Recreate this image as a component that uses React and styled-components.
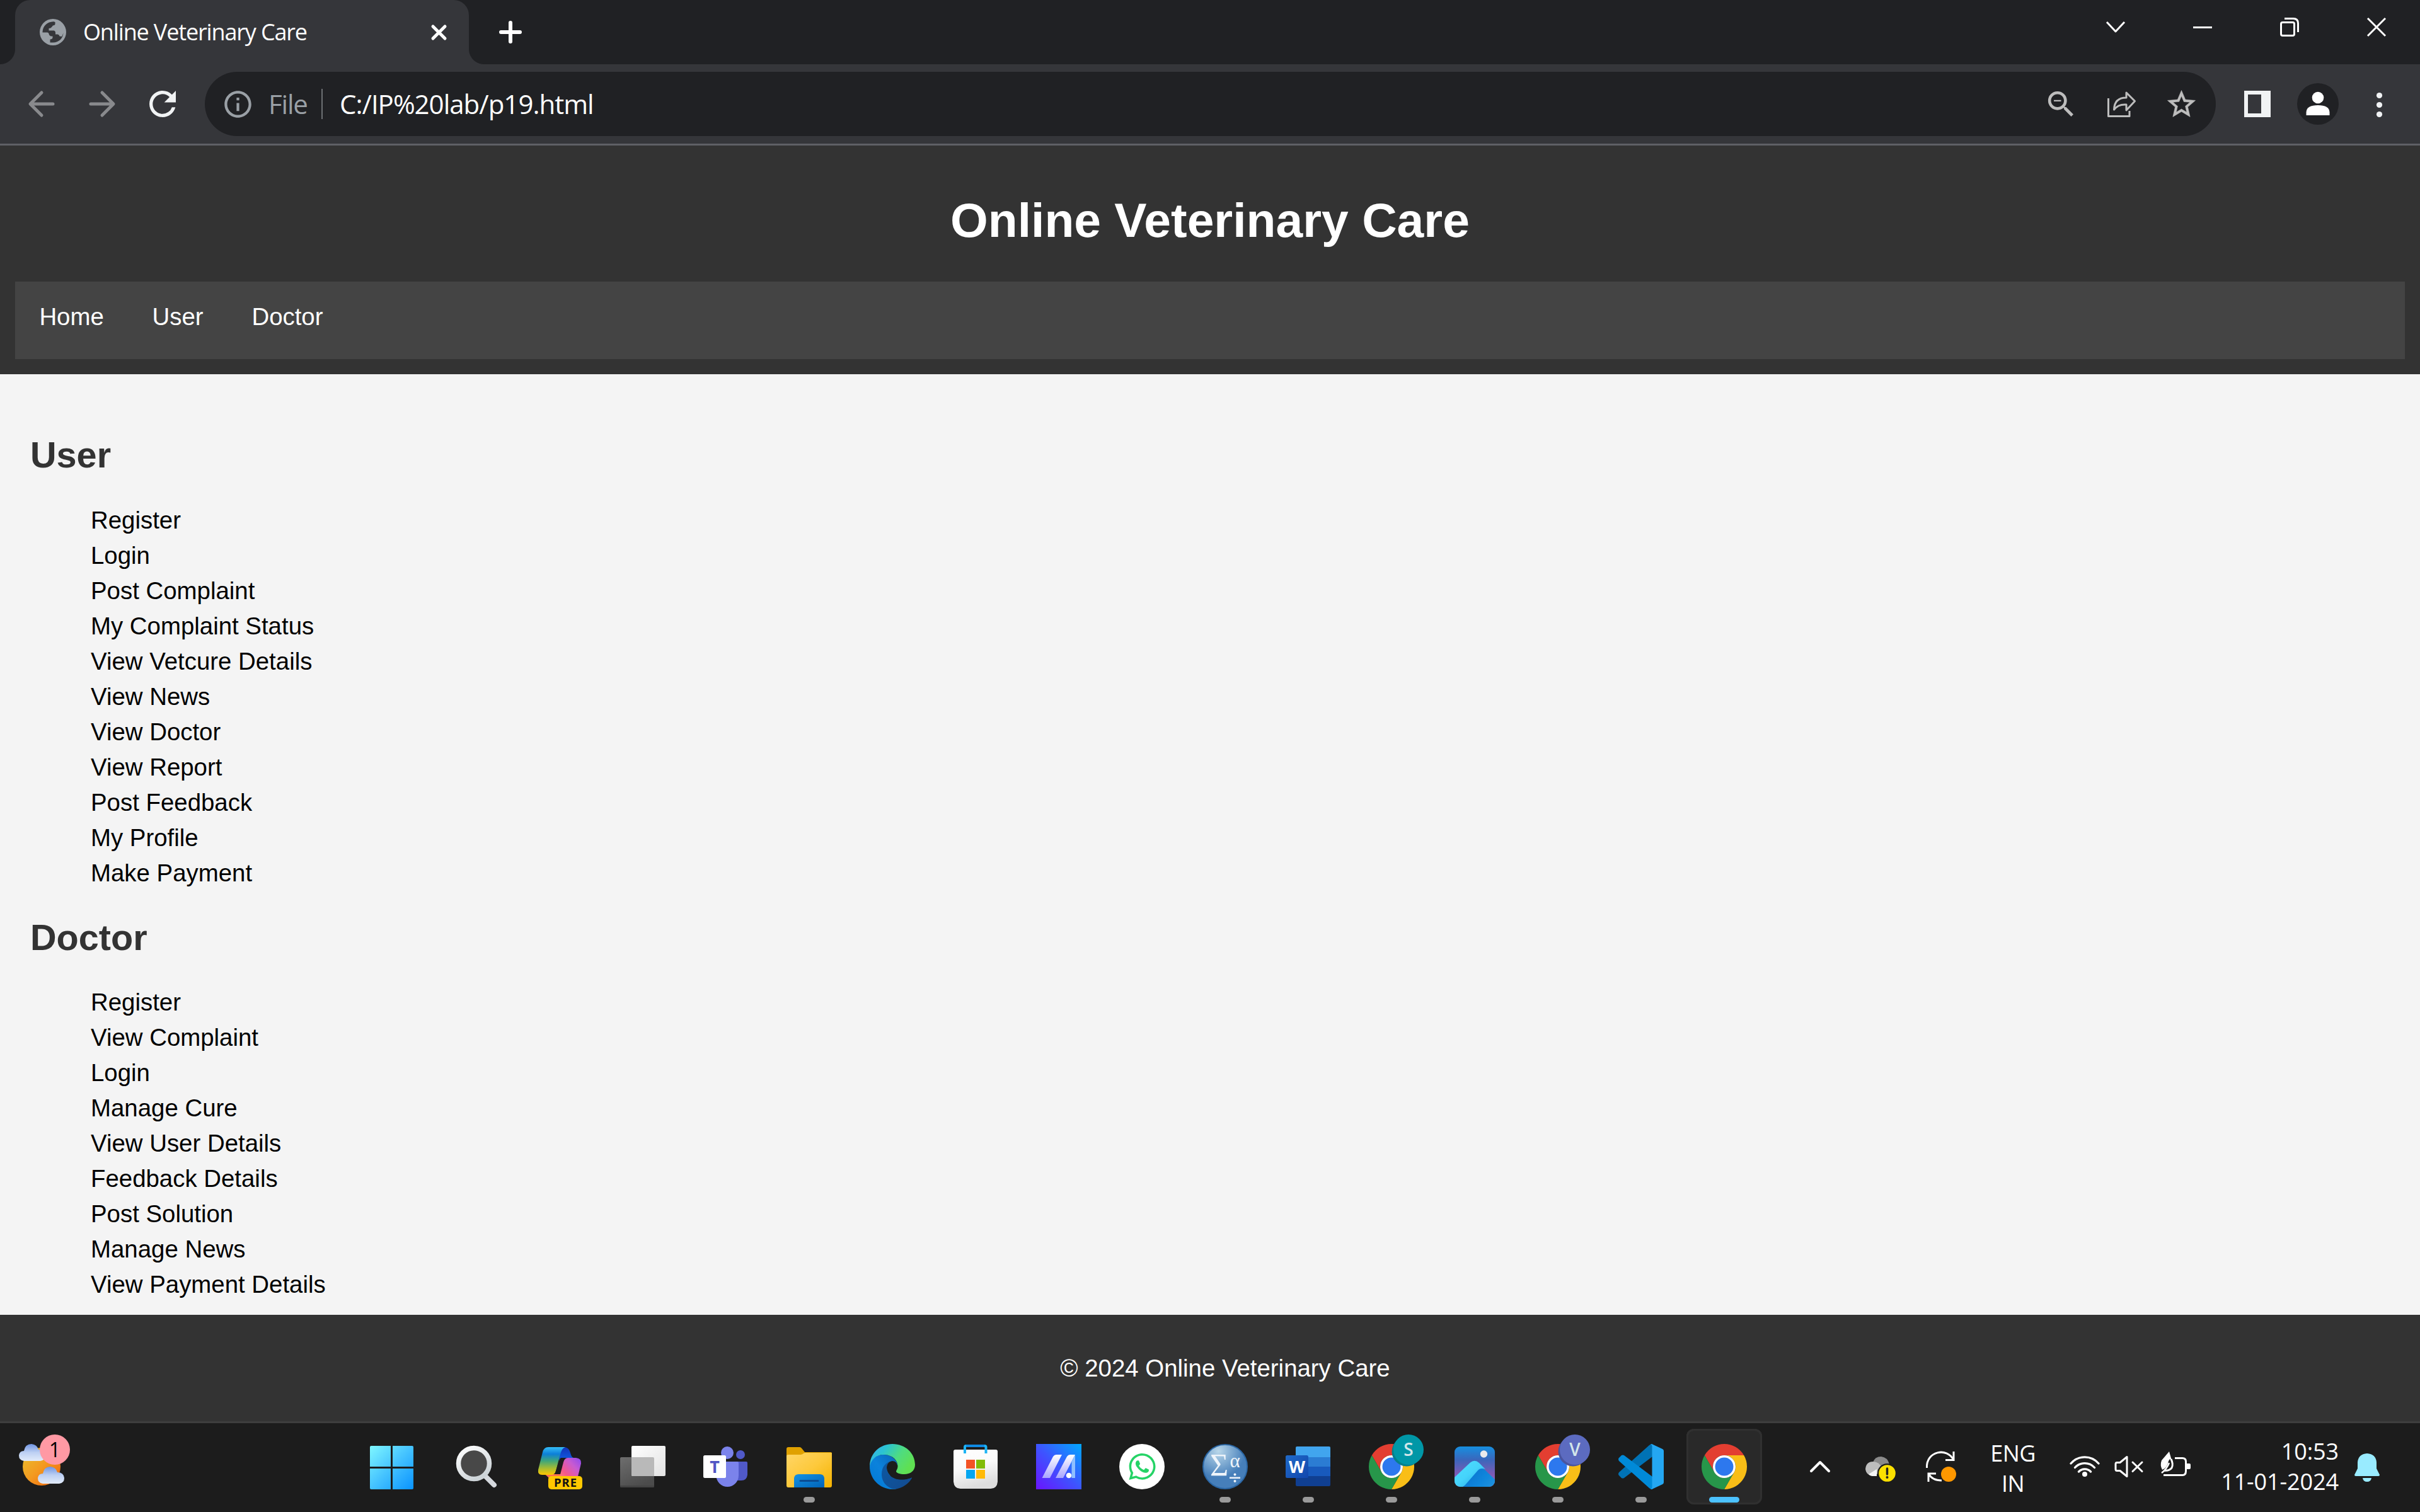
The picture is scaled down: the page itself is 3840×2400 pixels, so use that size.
import React from "react";
import styled, { createGlobalStyle, css } from "styled-components";
import { FaWhatsapp } from "react-icons/fa";
import { MdRefresh, MdInfoOutline, MdZoomOut } from "react-icons/md";

const Global = createGlobalStyle`
  *, *::before, *::after { box-sizing: border-box; }
  html, body { margin: 0; padding: 0; background: #1c1c1c; }
  body { width: 3840px; height: 2400px; overflow: hidden; }
  svg { display: block; flex: none; overflow: visible; }
`;

const uiFont = css`
  font-family: "Open Sans", "Noto Sans", sans-serif;
`;

const Screen = styled.div`
  width: 3840px;
  height: 2400px;
  display: flex;
  flex-direction: column;
`;

/* ---------- browser chrome ---------- */

const TabStrip = styled.div`
  height: 102px;
  flex: none;
  display: flex;
  background: #202124;
  ${uiFont}
`;

const TabFoot = styled.div`
  width: 24px;
  height: 24px;
  align-self: flex-end;
  background: radial-gradient(circle at ${(p) => (p.$side === "left" ? "0 0" : "100% 0")}, transparent 23.5px, #35363a 24.5px);
`;

const Tab = styled.div`
  width: 720px;
  display: flex;
  align-items: center;
  padding: 0 34px 0 39px;
  border-radius: 24px 24px 0 0;
  background: #35363a;
  color: #9aa0a6;
`;

const TabTitle = styled.span`
  flex: 1;
  margin-left: 27px;
  font-size: 36px;
  line-height: 48px;
  letter-spacing: -1.15px;
  white-space: nowrap;
  color: #fff;
`;

const NewTab = styled.div`
  margin-left: 24px;
  display: flex;
  align-items: center;
`;

const WindowControls = styled.div`
  margin-left: auto;
  height: 86px;
  padding-right: 54px;
  display: flex;
  align-items: center;
  gap: 108px;
`;

const Toolbar = styled.div`
  height: 129px;
  flex: none;
  display: flex;
  align-items: center;
  padding-left: 45px;
  background: #35363a;
  border-bottom: 3px solid #5f6066;
  ${uiFont}
`;

const NavButtons = styled.div`
  width: 280px;
  display: flex;
  align-items: center;
  gap: 54px;
  color: #f1f3f4;
`;

const AddressBar = styled.div`
  width: 3191px;
  height: 102px;
  display: flex;
  align-items: center;
  padding: 0 28px 0 27px;
  border-radius: 51px;
  background: #202124;
  color: #9aa0a6;
  font-size: 42px;
  line-height: 56px;
`;

const Scheme = styled.span`
  width: 84px;
  margin-left: 23px;
  letter-spacing: -1.2px;
`;

const Divider = styled.span`
  width: 2px;
  height: 48px;
  background: #6d7074;
`;

const Url = styled.span`
  flex: 1;
  margin-left: 27px;
  color: #fff;
  letter-spacing: -1px;
`;

const AddressActions = styled.div`
  display: flex;
  align-items: center;
  gap: 46px;
  color: #bdbdbd;
`;

const ToolbarActions = styled.div`
  display: flex;
  align-items: center;
  margin-left: 45px;
  gap: 42px;
`;

const Stroke = ({ w, h = w, color = "#fff", sw = 3, d, cap = "butt", fill = "none" }) => (
  <svg width={w} height={h} viewBox={`0 0 ${w} ${h}`} fill={fill} stroke={color} strokeWidth={sw} strokeLinecap={cap} strokeLinejoin="round">
    <path d={d} />
  </svg>
);

const Globe = () => (
  <svg width="42" height="42" viewBox="0 0 42 42">
    <circle cx="21" cy="21" r="21" fill="#9aa0a6" />
    <path
      fill="#35363a"
      d="M4.500 20.500C5 11 12 4.500 22 4.200L24.500 5V8.500Q24 10.500 21 10.500L19 13Q18 15 14.500 15V18.500H22.500Q25 19 25 22V24.500H28.500Q31 25 31.500 27.500L35 28C37.500 24 37.500 21 37.500 21C37.500 31 30 38 20 37.500H16.500V32.500Q20 32 20.500 30V27.500H17.500L15 25.500Q14.500 21.500 12 21.500H4.500Z"
    />
  </svg>
);

const Star = () => (
  <svg width="53" height="53" viewBox="0 0 24 24">
    <path
      fill="#bdbdbd"
      stroke="#bdbdbd"
      strokeWidth="0.250"
      d="M22 9.240l-7.190-.620L12 2 9.190 8.630 2 9.240l5.460 4.730L5.820 21 12 17.270 18.180 21l-1.630-7.030L22 9.240zM12 15.400l-3.760 2.270 1-4.280-3.320-2.880 4.380-.380L12 6.100l1.710 4.040 4.380.380-3.320 2.880 1 4.280L12 15.400z"
    />
  </svg>
);

const Browser = () => (
  <>
    <TabStrip>
      <TabFoot $side="left" />
      <Tab>
        <Globe />
        <TabTitle>Online Veterinary Care</TabTitle>
        <Stroke w={27} sw={5} cap="round" d="M4 4L23 23M23 4L4 23" />
      </Tab>
      <TabFoot $side="right" />
      <NewTab>
        <Stroke w={36} sw={6} cap="round" d="M18 3V33M3 18H33" />
      </NewTab>
      <WindowControls>
        <Stroke w={30} h={20} d="M1 2L15 17L29 2" />
        <Stroke w={30} h={3} d="M0 1.500H30" />
        <Stroke w={30} d="M3.500 7.500H20Q22.500 7.500 22.500 10V26Q22.500 28.500 20 28.500H4Q1.500 28.500 1.500 26V10Q1.500 7.500 4 7.500M7 1.500H21Q28.500 1.500 28.500 9V23" />
        <Stroke w={30} d="M1 1L29 29M29 1L1 29" />
      </WindowControls>
    </TabStrip>
    <Toolbar>
      <NavButtons>
        <Stroke w={42} sw={5} color="#898a8d" cap="round" d="M39 21H4M21 3L3 21L21 39" />
        <Stroke w={42} sw={5} color="#898a8d" cap="round" d="M3 21H38M21 3L39 21L21 39" />
        <svg width="42" height="42" viewBox="4 4 16 16">
          <MdRefresh size={24} color="#f1f3f4" />
        </svg>
      </NavButtons>
      <AddressBar>
        <MdInfoOutline size={51} />
        <Scheme>File</Scheme>
        <Divider />
        <Url>C:/IP%20lab/p19.html</Url>
        <AddressActions>
          <MdZoomOut size={55} />
          <Stroke w={45} h={42} sw={3} color="#bdbdbd" d="M1.500 12V40.500H35V32M10.500 30Q11 11 30 11V3L43.500 16.500L30 31V22Q17 21 10.500 30Z" />
          <Star />
        </AddressActions>
      </AddressBar>
      <ToolbarActions>
        <svg width="42" height="42" viewBox="0 0 42 42">
          <path fill="#f1f3f4" fillRule="evenodd" d="M0 0H42V42H0ZM6 6V36H27V6Z" />
        </svg>
        <svg width="66" height="66" viewBox="0 0 66 66">
          <circle cx="33" cy="33" r="33" fill="#202124" />
          <circle cx="33" cy="23" r="9.300" fill="#fff" />
          <path d="M14.500 51V46Q15 35 33 35Q51 35 51.500 46V51Z" fill="#fff" />
        </svg>
        <svg width="45" height="42" viewBox="0 0 45 42" fill="#f1f3f4">
          <circle cx="22.500" cy="7.500" r="4.600" />
          <circle cx="22.500" cy="22.500" r="4.600" />
          <circle cx="22.500" cy="37.500" r="4.600" />
        </svg>
      </ToolbarActions>
    </Toolbar>
  </>
);

/* ---------- web page ---------- */

const Page = styled.div`
  height: 2025px;
  flex: none;
  display: flex;
  flex-direction: column;
  background: #f4f4f4;
  font-family: "Liberation Sans", Arial, sans-serif;
  font-size: 38.4px;
  line-height: 44px;
  color: #000;
`;

const Header = styled.header`
  height: 363px;
  flex: none;
  padding: 24px;
  background: #333;
  color: #fff;
`;

const SiteTitle = styled.h1`
  margin: 50px 0 54px;
  font-size: 76.8px;
  line-height: 88px;
  text-align: center;
`;

const Nav = styled.nav`
  height: 123px;
  display: flex;
  align-items: flex-start;
  background: #444;
`;

const NavLink = styled.a`
  padding: 33.6px 38.4px;
  color: #fff;
`;

const Main = styled.main`
  height: 1493px;
  flex: none;
  padding: 48px;
`;

const SectionTitle = styled.h2`
  margin: 47px 0 48.6px;
  font-size: 57.6px;
  line-height: 66px;
  color: #333;
`;

const List = styled.ul`
  display: flex;
  flex-direction: column;
  gap: 12px;
  margin: 0;
  padding: 0 0 0 96px;
  list-style: none;
`;

const Footer = styled.footer`
  flex: 1;
  display: flex;
  align-items: center;
  justify-content: center;
  padding-left: 48px;
  background: #333;
  color: #fff;
`;

const userItems = [
  "Register", "Login", "Post Complaint", "My Complaint Status", "View Vetcure Details", "View News",
  "View Doctor", "View Report", "Post Feedback", "My Profile", "Make Payment",
];
const doctorItems = [
  "Register", "View Complaint", "Login", "Manage Cure", "View User Details", "Feedback Details",
  "Post Solution", "Manage News", "View Payment Details",
];

const Section = ({ title, items }) => (
  <section>
    <SectionTitle>{title}</SectionTitle>
    <List>
      {items.map((t) => (
        <li key={t}>{t}</li>
      ))}
    </List>
  </section>
);

/* ---------- taskbar ---------- */

const Taskbar = styled.div`
  height: 144px;
  flex: none;
  display: flex;
  align-items: flex-start;
  padding: 9px 0 0 6px;
  background: #1c1c1c;
  border-top: 3px solid #3e3e3e;
  color: #fff;
  font-size: 36px;
  line-height: 48px;
  ${uiFont}
`;

const Tile = styled.div`
  position: relative;
  width: 120px;
  height: 120px;
  flex: none;
  display: flex;
  align-items: center;
  justify-content: center;
  border-radius: 12px;
  ${(p) => p.$active && "background: #292929; box-shadow: inset 0 0 0 3px #303030, inset 0 3px 0 #363636;"}
`;

const Running = styled.span`
  position: absolute;
  bottom: 3px;
  left: 50%;
  transform: translateX(-50%);
  width: ${(p) => (p.$active ? 48 : 18)}px;
  height: 9px;
  border-radius: 4.5px;
  background: ${(p) => (p.$active ? "#4cc2ff" : "#9a9a9a")};
`;

const Badge = styled.span`
  position: absolute;
  top: 9px;
  left: ${(p) => p.$left}px;
  width: 48px;
  height: 48px;
  border-radius: 50%;
  background: ${(p) => p.$bg};
  color: ${(p) => p.$color || "#d3e6ea"};
  font-size: ${(p) => p.$size || 28}px;
  font-weight: ${(p) => (p.$shadow ? 600 : 400)};
  line-height: 47px;
  text-align: center;
  ${(p) => p.$shadow && `box-shadow: -3px 3px 0 -0.5px ${p.$shadow};`}
`;

const Apps = styled.div`
  display: flex;
  gap: 12px;
  margin-left: 438px;
`;

const Tray = styled.div`
  display: flex;
  align-items: center;
  height: 120px;
`;

const TrayItem = styled.div`
  margin-left: ${(p) => p.$gap}px;
`;

const TrayText = styled.div`
  width: ${(p) => p.$w}px;
  margin-left: ${(p) => p.$gap}px;
  margin-top: ${(p) => p.$top || 0}px;
  text-align: ${(p) => p.$align};
  letter-spacing: ${(p) => p.$ls}px;
`;

const Grad = ({ id, stops, x1 = 0, y1 = 0, x2 = 0, y2 = 1 }) => (
  <linearGradient id={id} x1={x1} y1={y1} x2={x2} y2={y2}>
    {stops.map((c, i) => (
      <stop key={i} offset={i / (stops.length - 1)} stopColor={c} />
    ))}
  </linearGradient>
);

const Icon = ({ children }) => (
  <svg width="72" height="72" viewBox="0 0 72 72">
    {children}
  </svg>
);

const TrayIcon = ({ w = 48, children }) => (
  <svg width={w} height="48" viewBox={`0 0 ${w} 48`}>
    {children}
  </svg>
);

const glyph = { textAnchor: "middle", fontFamily: "Open Sans, sans-serif", fontWeight: 700 };

const Cloud = ({ x, y }) => (
  <g transform={`translate(${x} ${y})`} fill="url(#cloud)">
    <path d="M8 27Q0 26 0 18Q1 11 8 11Q10 0 20 0Q29 1 31 9Q41 9 42 18Q42 26 34 27Z" />
  </g>
);

const Weather = () => (
  <svg width="120" height="120" viewBox="0 0 120 120">
    <defs>
      <Grad id="sun" stops={["#e9c32e", "#f39a20", "#f0600c"]} x2={1} />
      <Grad id="cloud" stops={["#6f94e2", "#bdd0f3", "#e2ebfa"]} />
    </defs>
    <circle cx="60" cy="60" r="30" fill="url(#sun)" />
    <Cloud x={24} y={24} />
    <Cloud x={54} y={60} />
  </svg>
);

const Windows = () => (
  <Icon>
    <defs>
      <linearGradient id="win" gradientUnits="userSpaceOnUse" x1="-2" y1="3" x2="68" y2="72">
        <stop offset="0" stopColor="#80f8ff" />
        <stop offset="0.500" stopColor="#45c3ff" />
        <stop offset="1" stopColor="#0a93ff" />
      </linearGradient>
    </defs>
    <path fill="url(#win)" d="M1 3H32V36H-1V5Q-1 3 1 3ZM35 3H66Q68 3 68 5V36H35ZM-1 39H32V72H1Q-1 72 -1 70ZM35 39H68V70Q68 72 66 72H35Z" />
  </Icon>
);

const Search = () => (
  <Icon>
    <defs><Grad id="lens" stops={["#ffffff", "#cdd4d8"]} x2={0.6} /></defs>
    <path d="M49 50L64 65" stroke="#d5d9de" strokeWidth="8" strokeLinecap="round" />
    <circle cx="32" cy="31" r="24.500" fill="#484848" stroke="url(#lens)" strokeWidth="7.500" />
  </Icon>
);

const Copilot = () => (
  <Icon>
    <defs>
      <Grad id="cpA" stops={["#35bdf8", "#0c7fd8", "#3fa67a", "#a2bb35", "#ffc800"]} />
      <Grad id="cpB" stops={["#ff9a6e", "#f4588a", "#c95bd0", "#8b48f2"]} y1={1} x2={1} y2={0} />
      <Grad id="cpC" stops={["#1233b8", "#1060e8"]} />
    </defs>
    <path fill="#ff7350" d="M12 48H42L38 60H22Q18 51 12 48Z" />
    <path fill="url(#cpC)" d="M42 5C51 5 52 11 54 17Q55 21 58 22H42Q38 22 35 28L36 8Z" />
    <path fill="url(#cpA)" d="M18 5H45C39 7 38 14 36 20L30 43Q28 49 23 49H8Q1 49 2 41L9 13Q11 5 18 5Z" />
    <path fill="#1c1c1c" d="M38 22H44Q42 24 41 29L35 46H29L35 27Q36 23 38 22Z" />
    <path fill="url(#cpB)" d="M49 22H62Q71 23 70 31L63 60H34L42 29Q44 22 49 22Z" />
    <rect x="18" y="51" width="54" height="21" rx="5" fill="#ffc800" />
    <text {...glyph} x="45.500" y="68" fontSize="18.500" letterSpacing="1" fill="#111">PRE</text>
  </Icon>
);

const TaskView = () => (
  <Icon>
    <defs>
      <Grad id="tvA" stops={["#ffffff", "#e2e2e2"]} x2={1} />
      <Grad id="tvB" stops={["#6e6e6e", "#4c4c4c"]} x2={0.5} />
    </defs>
    <rect y="21" width="54" height="48" rx="2" fill="url(#tvB)" />
    <rect x="18" y="3" width="54" height="48" rx="2" fill="url(#tvA)" />
    <path d="M18 21H52Q54 21 54 23V51H20Q18 51 18 49Z" fill="#b9b9b9" />
    <path d="M0 66H54V67Q54 69 52 69H2Q0 69 0 67Z" fill="#444" />
  </Icon>
);

const Teams = () => (
  <Icon>
    <circle cx="59" cy="17" r="7" fill="#5059c9" />
    <path d="M54 28H68Q70 28 70 30V49Q69 58 60 58H54Z" fill="#5059c9" />
    <circle cx="38" cy="14" r="10" fill="#7b83eb" />
    <path d="M20.500 28H54Q56 28 56 30V50A17.750 18 0 0 1 20.500 50Z" fill="#7b83eb" />
    <rect y="18" width="36" height="36" rx="2.500" fill="#fff" />
    <text {...glyph} x="18" y="46" fontSize="27" fill="#4f55c4">T</text>
  </Icon>
);

const Explorer = () => (
  <Icon>
    <defs>
      <Grad id="fold" stops={["#ffd667", "#fdc93c", "#f5b200"]} x2={1} />
      <Grad id="foldB" stops={["#1593e2", "#0062b8"]} x2={1} />
    </defs>
    <path d="M3 5H21Q23 5 25 8L29 13H70Q72 13 72 15V30H0V8Q0 5 3 5Z" fill="#e0a100" />
    <path d="M3 17H22Q25 17 27 15L29 14H72V66Q72 69 69 69H3Q0 69 0 66V19Q0 17 3 17Z" fill="url(#fold)" />
    <path d="M12 69V54Q13 48 19 48H53Q59 48 60 54V69Z" fill="url(#foldB)" />
    <path d="M22 58.500H50" stroke="#0a4c93" strokeWidth="3" strokeLinecap="round" />
  </Icon>
);

const Edge = () => (
  <Icon>
    <defs>
      <Grad id="edA" stops={["#3aa9f5", "#2bc3d2", "#4fdc80", "#5fe052"]} x2={1} y2={0.5} />
      <Grad id="edB" stops={["#0a63b4", "#0b82dc", "#0078d4"]} x1={1} x2={0} />
      <Grad id="edC" stops={["#0c59a4", "#134a8e"]} x2={1} />
    </defs>
    <path fill="url(#edB)" d="M0 36C2 22 12 17 22 17C35 17 43 25 44.500 34L36 28L30 64L42 71.400C18 75 0 56 0 36Z" />
    <path fill="url(#edC)" d="M36 27C26 28 19 36 19 48C19 62 30 72 42 71.400C52 70 63 62 67 54C67 53 66 53 65 54C50 60 28 56 27 38C27 32 31 28 36 27Z" />
    <path fill="#1c1c1c" d="M36 27C30 28 27 32 27 38C27.500 46 33 53 44 56C56 57 61 55 65 54L71 50L58 48L42 46Q41 43 44 38C45 30 40 27 36 27Z" />
    <path fill="url(#edA)" d="M0 36C0 14 17 0 36 0C57 0 72 15 72 33C72 43 64 48 55 48C48 48 42 46 42 43.500C42 42 44.500 40 44.500 35C44.500 25 35 17 22 17C10 17 2 25 0 36Z" />
  </Icon>
);

const Store = () => (
  <Icon>
    <defs>
      <Grad id="bag" stops={["#ffffff", "#fafafa", "#dddddd"]} x2={0.3} />
    </defs>
    <path d="M4 9H68Q71 9 71 12V60Q70 71 60 71H12Q2 71 1 60V12Q1 9 4 9Z" fill="url(#bag)" />
    <path d="M19 15V5Q19 3 21 3H50Q52.500 3 52.500 5V15" fill="none" stroke="#1db4f4" strokeWidth="4" />
    <path d="M21 3H50" stroke="#0f8be4" strokeWidth="4" />
    <rect x="21" y="25" width="14" height="14" fill="#f35325" />
    <rect x="37" y="25" width="14" height="14" fill="#81bc06" />
    <rect x="21" y="41" width="14" height="14" fill="#05a6f0" />
    <rect x="37" y="41" width="14" height="14" fill="#ffba08" />
  </Icon>
);

const MyAsus = () => (
  <Icon>
    <defs>
      <Grad id="asus" stops={["#6a14ff", "#3d55ff", "#00a9ff"]} y1={1} x2={1} y2={0} />
      <Grad id="asusW" stops={["#ffffff", "#a9a6ff"]} />
    </defs>
    <rect width="72" height="72" fill="url(#asus)" />
    <path fill="url(#asusW)" d="M9.500 54L27 20Q29 17 32 17H41L22 54ZM31 54L49 20Q51 17 54 17H62L43 54Z" />
    <path fill="#8fc0ff" d="M62 17V54H56.500V28Z" />
    <circle cx="52" cy="50" r="4.300" fill="#fff" />
  </Icon>
);

const WhatsApp = () => (
  <Icon>
    <circle cx="36" cy="36" r="36" fill="#fff" />
    <FaWhatsapp x="12.500" y="12" size={48} color="#25d366" />
  </Icon>
);

const MathIcon = () => (
  <Icon>
    <defs>
      <radialGradient id="math" cx="0.350" cy="0.150" r="0.600">
        <stop offset="0" stopColor="#b9d7ea" />
        <stop offset="1" stopColor="#467fba" />
      </radialGradient>
    </defs>
    <circle cx="36" cy="36" r="35" fill="url(#math)" stroke="#2b67a5" strokeWidth="2" />
    <g fill="#eef4fa" fontFamily="Liberation Serif, serif" textAnchor="middle">
      <text x="26.500" y="50" fontSize="50">Σ</text>
      <text x="51.500" y="37" fontSize="31">α</text>
    </g>
    <g fill="#eef4fa">
      <rect x="43" y="52.500" width="17" height="2.500" />
      <circle cx="51.500" cy="48.500" r="2" />
      <circle cx="51.500" cy="59" r="2" />
    </g>
  </Icon>
);

const Word = () => (
  <Icon>
    <defs><Grad id="wd" stops={["#1f6ac8", "#1247ad"]} x2={1} /></defs>
    <path d="M18 4H69Q71 4 71 6V21H16V6Q16 4 18 4Z" fill="#41a5ee" />
    <rect x="16" y="21" width="55" height="15" fill="#2b7cd3" />
    <rect x="16" y="36" width="55" height="15" fill="#185abd" />
    <path d="M16 51H71V65Q71 67 69 67H18Q16 67 16 65Z" fill="#103f91" />
    <rect y="18" width="36" height="36" rx="2.500" fill="url(#wd)" />
    <text {...glyph} x="18" y="46" fontSize="27" fill="#fff">W</text>
  </Icon>
);

const Chrome = () => (
  <Icon>
    <path fill="#e33e31" d="M36 18H67.200A36 36 0 0 0 4.800 18L20.400 45A18 18 0 0 1 36 18Z" />
    <path fill="#f9be17" d="M67.200 18A36 36 0 0 1 36 72L51.600 45A18 18 0 0 0 36 18Z" />
    <path fill="#27964a" d="M36 72A36 36 0 0 1 4.800 18L20.400 45A18 18 0 0 0 51.600 45Z" />
    <circle cx="36" cy="36" r="18" fill="#fff" />
    <circle cx="36" cy="36" r="14.500" fill="#2d78ee" />
  </Icon>
);

const Photos = () => (
  <Icon>
    <defs>
      <Grad id="phA" stops={["#168fe0", "#3b66bb", "#7a5bb5", "#a465c0"]} />
      <Grad id="phB" stops={["#4fdfff", "#45d3fb", "#1f9fe0"]} x2={1} />
      <Grad id="phC" stops={["#0a74cf", "#0f86dc", "#2596dd"]} x1={0} y1={0.5} x2={1} />
      <clipPath id="phClip"><rect x="4" y="4" width="64" height="64" rx="9" /></clipPath>
    </defs>
    <g clipPath="url(#phClip)">
      <rect x="4" y="4" width="64" height="64" fill="url(#phA)" />
      <path fill="url(#phC)" d="M14 72L40 41Q46 36 51 40L72 60V72Z" />
      <path fill="url(#phB)" d="M2 55L29 29.500Q36 24 43 30L53 40Q45 37 41 42L21 65Q16 70 10 68L2 66Z" />
    </g>
    <circle cx="50.500" cy="16" r="5.700" fill="#e9eaec" />
  </Icon>
);

const VsCode = () => (
  <Icon>
    <path fill="#0072b5" d="M49 2L1 45Q-1 48 1 50L5 54Q7 55 9 54L54 20V0Q51 0 49 2Z" />
    <path fill="#008ad8" d="M49 70L1 27Q-1 24 1 22L5 18Q7 17 9 18L54 52V72Q51 72 49 70Z" />
    <path fill="#24a7f2" d="M51 0.500Q52 0 54 0.500L70 8Q72 9 72 11V61Q72 63 70 64L54 71.500Q52 72 51 71.500Q53.500 71 53.500 68V4Q53.500 1 51 0.500Z" />
  </Icon>
);

const apps = [
  { icon: Windows }, { icon: Search }, { icon: Copilot }, { icon: TaskView }, { icon: Teams },
  { icon: Explorer, running: true }, { icon: Edge }, { icon: Store }, { icon: MyAsus }, { icon: WhatsApp },
  { icon: MathIcon, running: true }, { icon: Word, running: true },
  { icon: Chrome, running: true, badge: { text: "S", bg: "#0097a7", shadow: "#067f8b" } },
  { icon: Photos, running: true },
  { icon: Chrome, running: true, badge: { text: "V", bg: "#5c6bc0", shadow: "#4a559f" } },
  { icon: VsCode, running: true },
  { icon: Chrome, running: true, active: true },
];

const TaskbarView = () => (
  <Taskbar>
    <Tile>
      <Weather />
      <Badge $left={57} $bg="#ff99a4" $color="#000" $size={32}>1</Badge>
    </Tile>
    <Apps>
      {apps.map(({ icon: AppIcon, running, active, badge }, i) => (
        <Tile key={i} $active={active}>
          <AppIcon />
          {badge && <Badge $left={63} $bg={badge.bg} $shadow={badge.shadow}>{badge.text}</Badge>}
          {running && <Running $active={active} />}
        </Tile>
      ))}
    </Apps>
    <Tray>
      <TrayItem $gap={76}>
        <TrayIcon w={32}>
          <path d="M2 31L16 17L30 31" fill="none" stroke="#fff" strokeWidth="4" strokeLinecap="round" strokeLinejoin="round" />
        </TrayIcon>
      </TrayItem>
      <TrayItem $gap={56}>
        <TrayIcon>
          <path d="M12 17Q15 8 25 8Q35 9 38 20L26 28Z" fill="#8a8a8a" />
          <path d="M11 39Q1 37 0 28Q1 16 12 16Q22 16 26 26L16 39Z" fill="#bdbdbd" />
          <path d="M5 36L18 28V39H11Q8 39 5 36Z" fill="#f4f4f4" />
          <circle cx="34.500" cy="34.500" r="15.500" fill="#1c1c1c" />
          <circle cx="34.500" cy="34.500" r="13.300" fill="#fbe000" />
          <path d="M34.500 27V36" stroke="#222" strokeWidth="3.500" strokeLinecap="round" />
          <circle cx="34.500" cy="41" r="2" fill="#222" />
        </TrayIcon>
      </TrayItem>
      <TrayItem $gap={48}>
        <TrayIcon>
          <g fill="none" stroke="#fff" strokeWidth="3">
            <path d="M1.500 26C0 -1 34 -7 43.500 13M44 0V13.500H31" />
            <path d="M4 48V35H16M4 35Q10 46 25 46" />
          </g>
          <circle cx="36" cy="36" r="12" fill="#ff9800" />
        </TrayIcon>
      </TrayItem>
      <TrayText $w={100} $gap={40} $align="center" $top={5} $ls={-0.6}>ENG<br />IN</TrayText>
      <TrayItem $gap={40}>
        <TrayIcon>
          <g fill="none" stroke="#fff" strokeWidth="3.300" strokeLinecap="round">
            <path d="M2 19A29 29 0 0 1 46 19" />
            <path d="M8.500 25.500A21 21 0 0 1 39.500 25.500" />
            <path d="M14.500 32A13 13 0 0 1 33.500 32" />
          </g>
          <circle cx="24" cy="36" r="4" fill="#fff" />
        </TrayIcon>
      </TrayItem>
      <TrayItem $gap={23}>
        <TrayIcon>
          <path d="M4 17.500H9L20 8.500V39.500L9 30.500H4Q2 30.500 2 28V20Q2 17.500 4 17.500ZM29 17L44 31.500M44 17L29 31.500" fill="none" stroke="#fff" strokeWidth="3" strokeLinecap="round" strokeLinejoin="round" />
        </TrayIcon>
      </TrayItem>
      <TrayItem $gap={25}>
        <TrayIcon>
          <g fill="none" stroke="#fff" strokeWidth="3">
            <path d="M23 10.500H35Q40.500 10.500 40.500 16V31Q40.500 37.500 35 37.500H5" />
            <path d="M17 12Q21 20 18 26Q14 31 6 30" />
            <path d="M2 34Q10 28 14 18" strokeWidth="2.500" />
          </g>
          <path d="M14 0L2 14Q-1 22 3 29Q11 26 13 15L15 12L18 14Z" fill="#fff" />
          <path d="M42 19H46Q48 19 48 21V26Q48 28 46 28H42Z" fill="#fff" />
        </TrayIcon>
      </TrayItem>
      <TrayText $w={200} $gap={35} $align="right" $top={-1} $ls={-0.1}>10:53<br />11-01-2024</TrayText>
      <TrayItem $gap={25}>
        <TrayIcon w={40}>
          <path fill="#99ebff" d="M20 3Q34 4 35 17V27L40 37Q40 39 38 39H2Q0 39 0 37L5 27V17Q6 4 20 3ZM13 42H27Q26 48 20 48Q14 48 13 42Z" />
        </TrayIcon>
      </TrayItem>
    </Tray>
  </Taskbar>
);

export default function App() {
  return (
    <Screen>
      <Global />
      <Browser />
      <Page>
        <Header>
          <SiteTitle>Online Veterinary Care</SiteTitle>
          <Nav>
            <NavLink>Home</NavLink>
            <NavLink>User</NavLink>
            <NavLink>Doctor</NavLink>
          </Nav>
        </Header>
        <Main>
          <Section title="User" items={userItems} />
          <Section title="Doctor" items={doctorItems} />
        </Main>
        <Footer>© 2024 Online Veterinary Care</Footer>
      </Page>
      <TaskbarView />
    </Screen>
  );
}
